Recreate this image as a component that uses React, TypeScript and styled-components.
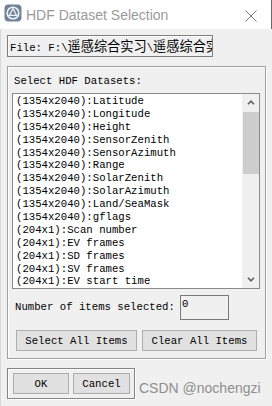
import styled, { createGlobalStyle } from "styled-components";

const GlobalStyle = createGlobalStyle`
  html, body {
    margin: 0;
    padding: 0;
    background: #f0f0f0;
  }
`;

const mono = `"Liberation Mono", "Noto Sans CJK SC", monospace`;

const Window = styled.div`
  position: relative;
  width: 272px;
  height: 406px;
  display: flex;
  flex-direction: column;
  overflow: hidden;
  background: #f0f0f0;
`;

const TitleBar = styled.div`
  height: 29px;
  flex-shrink: 0;
  display: flex;
  align-items: center;
  padding-left: 4px;
  background: #ffffff;
  border-right: 1px solid #6a6a6a;
  box-sizing: border-box;
`;

const TitleIcon = styled.svg`
  width: 18px;
  height: 18px;
  margin-bottom: 3px;
  flex-shrink: 0;
`;

const TitleText = styled.span`
  margin-left: 4px;
  font-family: "Liberation Sans", Arial, sans-serif;
  font-size: 14px;
  color: #9a9a9a;
  flex: 1;
  padding-top: 1px;
`;

const CloseIcon = styled.svg`
  width: 12px;
  height: 12px;
  margin-right: 14px;
  margin-top: 2px;
`;

const Body = styled.div`
  flex: 1;
  display: flex;
  flex-direction: column;
  align-items: flex-start;
  padding: 6px 0 0 6px;
  border-left: 1px solid #d8d8d8;
`;

const FileBox = styled.div`
  width: 206px;
  height: 22px;
  box-sizing: border-box;
  border: 1px solid #7f7f7f;
  box-shadow: inset 1px 1px 0 #ffffff;
  padding-left: 2px;
  font-family: ${mono};
  font-size: 10.67px;
  line-height: 20px;
  white-space: nowrap;
  overflow: hidden;
  color: #000;
`;

const Cjk = styled.span`
  font-family: "Noto Sans CJK SC", sans-serif;
  font-size: 13.2px;
`;

const Group = styled.div<{ $dark?: boolean }>`
  box-sizing: border-box;
  border: 1px solid ${(p) => (p.$dark ? "#858585" : "#a0a0a0")};
  box-shadow: inset 1px 1px 0 #ffffff, 1px 1px 0 #ffffff;
  margin-top: 9px;
`;

const DatasetGroup = styled(Group)`
  width: 259px;
  padding: 8px 0 7px 4px;
  display: flex;
  flex-direction: column;
`;

const Label = styled.div`
  font-family: ${mono};
  font-size: 10.67px;
  line-height: 13px;
  color: #000;
  white-space: nowrap;
`;

const GroupLabel = styled(Label)`
  margin-left: 2px;
`;

const ListBox = styled.div`
  margin-top: 5px;
  width: 248px;
  height: 196px;
  box-sizing: border-box;
  border: 1px solid #8a8a8a;
  background: #ffffff;
  display: flex;
`;

const Rows = styled.div`
  flex: 1;
  overflow: hidden;
  padding: 1px 0 0 3px;
`;

const Row = styled.div`
  font-family: ${mono};
  font-size: 10.67px;
  line-height: 12.9px;
  height: 12.9px;
  color: #000;
  white-space: nowrap;
`;

const ScrollBar = styled.div`
  width: 17px;
  display: flex;
  flex-direction: column;
  background: #f0f0f0;
`;

const ArrowButton = styled.div`
  height: 17px;
  display: flex;
  align-items: center;
  justify-content: center;
`;

const Track = styled.div`
  flex: 1;
  padding: 1px 0 0 1px;
`;

const Thumb = styled.div`
  height: 62px;
  background: #cdcdcd;
`;

const CountRow = styled.div`
  margin-top: 6px;
  display: flex;
  align-items: center;
  gap: 5px;
  padding-left: 3px;
`;

const CountInput = styled.div`
  width: 49px;
  height: 25px;
  box-sizing: border-box;
  border: 1px solid #7a7a7a;
  background: #f0f0f0;
  font-family: ${mono};
  font-size: 10.67px;
  line-height: 13px;
  padding: 2px 0 0 1px;
  color: #000;
`;

const ButtonRow = styled.div`
  margin-top: 10px;
  display: flex;
  gap: 5px;
  padding-left: 4px;
`;

const Button = styled.button<{ $w: number }>`
  width: ${(p) => p.$w}px;
  height: 21px;
  box-sizing: border-box;
  padding: 0;
  border: 1px solid #adadad;
  background: #e1e1e1;
  font-family: ${mono};
  font-size: 10.67px;
  color: #000;
  white-space: nowrap;
`;

const ActionGroup = styled(Group)`
  width: 128px;
  padding: 4px 4px 4px 5px;
  display: flex;
  gap: 4px;
`;

const Watermark = styled.div`
  position: absolute;
  left: 139px;
  top: 380px;
  font-family: "Liberation Sans", Arial, sans-serif;
  font-size: 14px;
  line-height: 16px;
  color: #8e8e8e;
  white-space: nowrap;
`;

const datasets = [
  "(1354x2040):Latitude",
  "(1354x2040):Longitude",
  "(1354x2040):Height",
  "(1354x2040):SensorZenith",
  "(1354x2040):SensorAzimuth",
  "(1354x2040):Range",
  "(1354x2040):SolarZenith",
  "(1354x2040):SolarAzimuth",
  "(1354x2040):Land/SeaMask",
  "(1354x2040):gflags",
  "(204x1):Scan number",
  "(204x1):EV frames",
  "(204x1):SD frames",
  "(204x1):SV frames",
  "(204x1):EV start time",
];

const Chevron = ({ up }: { up?: boolean }) => (
  <svg width="8" height="5" viewBox="0 0 8 5">
    <path
      d={up ? "M1 4.2 L4 1.2 L7 4.2" : "M1 0.8 L4 3.8 L7 0.8"}
      fill="none"
      stroke="#606060"
      strokeWidth="1.6"
    />
  </svg>
);

function App() {
  return (
    <Window>
      <GlobalStyle />
      <TitleBar>
        <TitleIcon viewBox="0 0 18 18">
          <rect x="0.5" y="0.5" width="17" height="17" rx="4" fill="#718396" />
          <circle cx="9" cy="9" r="5.8" fill="none" stroke="#eef2f6" strokeWidth="1.6" />
          <path d="M9 4.6 L12.6 11.4 L5.4 11.4 Z" fill="none" stroke="#eef2f6" strokeWidth="1.2" />
        </TitleIcon>
        <TitleText>HDF Dataset Selection</TitleText>
        <CloseIcon viewBox="0 0 12 12">
          <path d="M0.5 0.5 L11.5 11.5 M11.5 0.5 L0.5 11.5" stroke="#7a7a7a" strokeWidth="1" />
        </CloseIcon>
      </TitleBar>
      <Body>
        <FileBox>
          File: F:\<Cjk>遥感综合实习</Cjk>\<Cjk>遥感综合实习</Cjk>
        </FileBox>
        <DatasetGroup>
          <GroupLabel>Select HDF Datasets:</GroupLabel>
          <ListBox>
            <Rows>
              {datasets.map((d) => (
                <Row key={d}>{d}</Row>
              ))}
            </Rows>
            <ScrollBar>
              <ArrowButton>
                <Chevron up />
              </ArrowButton>
              <Track>
                <Thumb />
              </Track>
              <ArrowButton>
                <Chevron />
              </ArrowButton>
            </ScrollBar>
          </ListBox>
          <CountRow>
            <Label>Number of items selected:</Label>
            <CountInput>0</CountInput>
          </CountRow>
          <ButtonRow>
            <Button $w={121}>Select All Items</Button>
            <Button $w={115}>Clear All Items</Button>
          </ButtonRow>
        </DatasetGroup>
        <ActionGroup $dark>
          <Button $w={56}>OK</Button>
          <Button $w={57}>Cancel</Button>
        </ActionGroup>
      </Body>
      <Watermark>CSDN @nochengzi</Watermark>
    </Window>
  );
}

export default App;
